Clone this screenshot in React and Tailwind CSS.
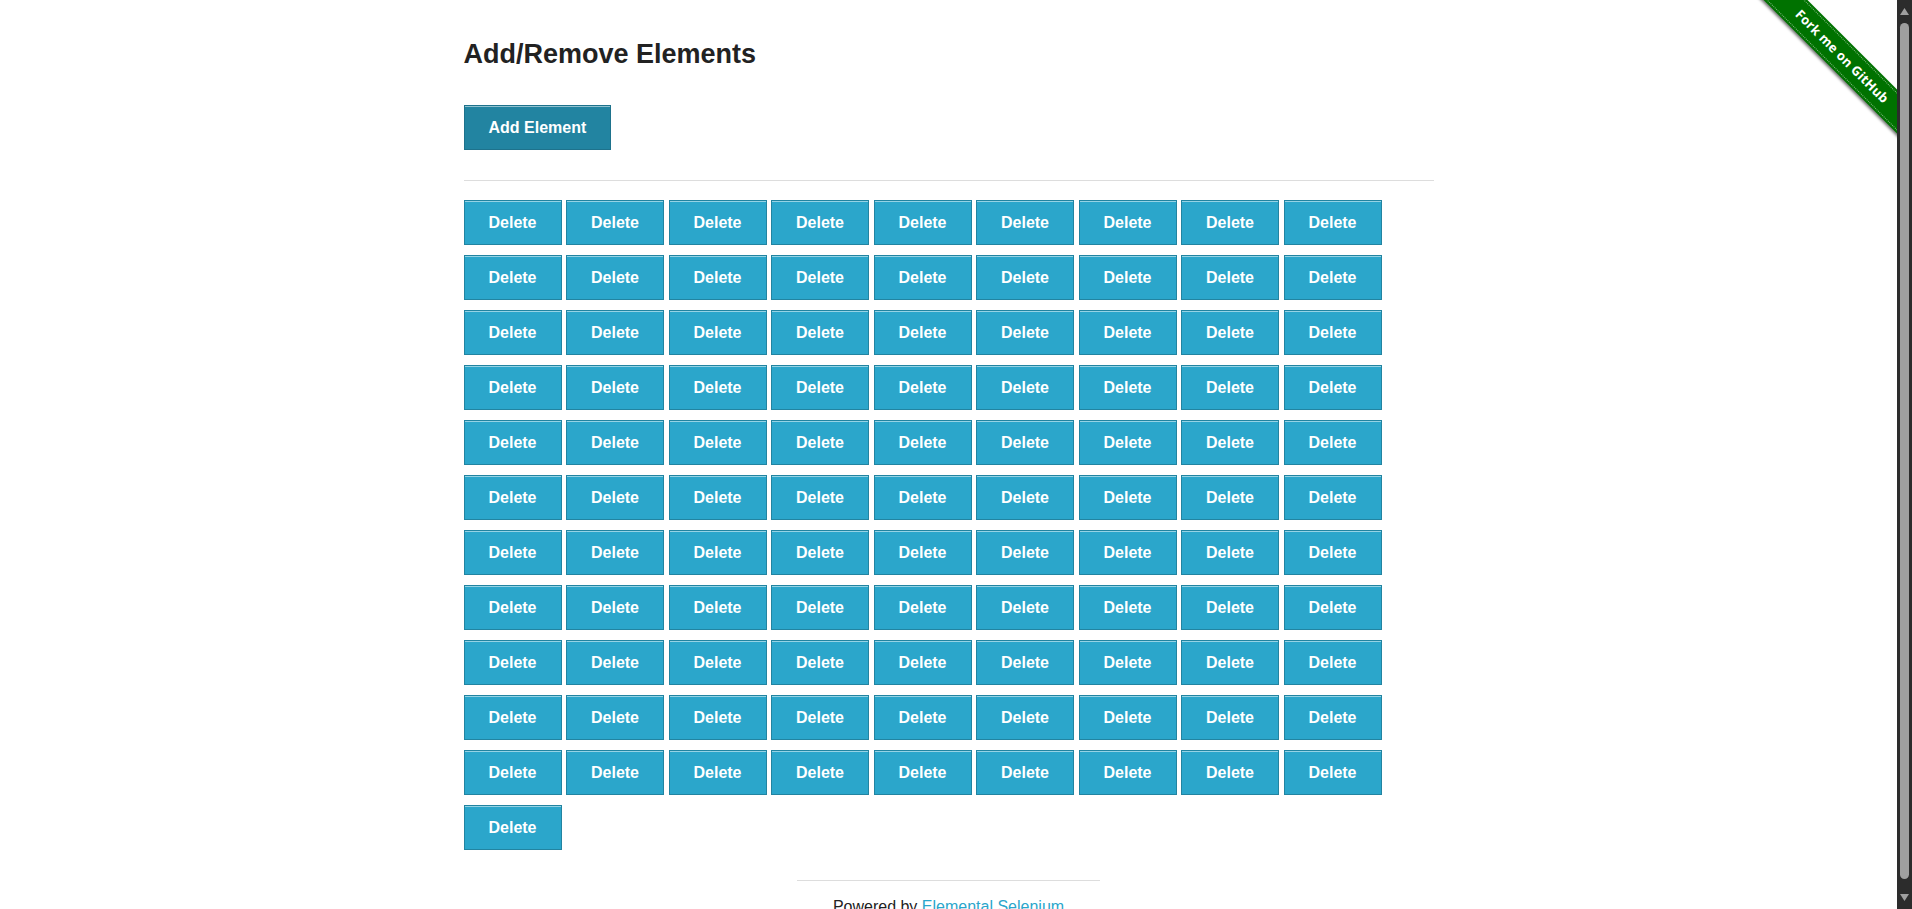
import React from "react";

const DELETE_COUNT = 100;

function ForkRibbon() {
  return (
    <div className="pointer-events-none absolute right-0 top-0 h-[149px] w-[149px] overflow-hidden">
      <div className="absolute left-[-31px] top-[41px] flex h-[31px] w-[250px] rotate-45 items-center justify-center bg-[#007200] shadow-[0_2px_3px_rgba(0,0,0,0.55)]">
        <div className="absolute inset-x-0 top-[2px] border-t border-dotted border-white/50" />
        <div className="absolute inset-x-0 bottom-[2px] border-t border-dotted border-white/50" />
        <span className="font-['Open_Sans',sans-serif] text-[13px] font-bold tracking-[0.2px] text-white">
          Fork me on GitHub
        </span>
      </div>
    </div>
  );
}

function ScrollBar() {
  return (
    <div className="flex h-screen w-[15px] shrink-0 flex-col items-center bg-[#2c2c2c] pt-[8px] pb-[8px]">
      <svg width="9" height="7" viewBox="0 0 9 7">
        <polygon points="4.5,0 9,7 0,7" fill="#9f9f9f" />
      </svg>
      <div className="mt-[8px] mb-[15px] w-[9px] flex-1 rounded-full bg-[#9f9f9f]" />
      <svg width="9" height="7" viewBox="0 0 9 7">
        <polygon points="0,0 9,0 4.5,7" fill="#9f9f9f" />
      </svg>
    </div>
  );
}

export default function App() {
  return (
    <div className="flex h-screen overflow-hidden bg-white font-['Liberation_Sans',Arial,sans-serif] text-[#222222]">
      <div className="relative h-screen flex-1 overflow-hidden">
        <ForkRibbon />

        <div className="mx-auto w-[1000px] px-[15px] pt-[37px]">
          {/* Example content */}
          <h3 className="text-[27px] font-bold leading-[34px] text-[#222222]">
            Add/Remove Elements
          </h3>

          <button className="mt-[34px] flex h-[45px] items-center border border-[#1e728c] bg-[#2284a1] px-6 text-[16px] font-bold text-white shadow-[inset_0_1px_0_rgba(255,255,255,0.5)]">
            Add Element
          </button>

          <hr className="mt-[30px] border-t border-[#dddddd]" />

          <div className="mt-[19px] flex flex-wrap gap-x-[4.5px] gap-y-[10px]">
            {Array.from({ length: DELETE_COUNT }).map((_, i) => (
              <button
                key={i}
                className="flex h-[45px] w-[98px] items-center justify-center border border-[#2284a1] bg-[#2ba6cb] text-[16px] font-bold text-white shadow-[inset_0_1px_0_rgba(255,255,255,0.5)]"
              >
                Delete
              </button>
            ))}
          </div>

          {/* Footer */}
          <div className="mx-auto mt-[30px] w-[303px] pb-[15px]">
            <hr className="border-t border-[#dddddd]" />
            <div className="mt-[14px] text-center text-[16px] leading-[24px]">
              Powered by{" "}
              <a href="#" className="text-[#2ba6cb]">
                Elemental Selenium
              </a>
            </div>
          </div>
        </div>
      </div>
      <ScrollBar />
    </div>
  );
}
